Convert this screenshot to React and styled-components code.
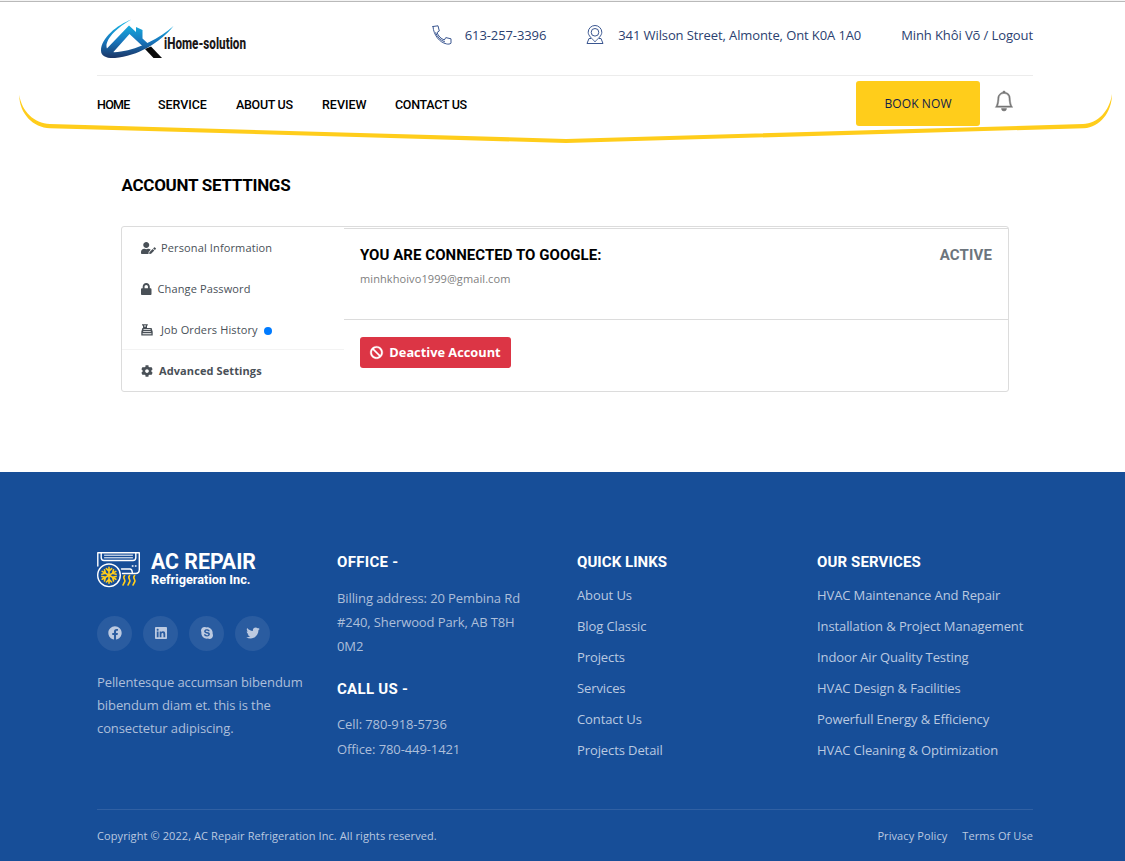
import React from 'react';
import styled, { createGlobalStyle } from 'styled-components';
import { FaUserEdit, FaLock, FaCog, FaBan } from 'react-icons/fa';
import { RiFacebookCircleFill, RiLinkedinBoxFill, RiSkypeFill, RiTwitterFill } from 'react-icons/ri';
import { BsBell } from 'react-icons/bs';

const GlobalStyle = createGlobalStyle`
  * { box-sizing: border-box; }
  body { margin: 0; background: #fff; font-family: 'Open Sans', sans-serif; }
  h1, h2, h3, p, ul { margin: 0; padding: 0; }
  ul { list-style: none; }
  a { color: inherit; text-decoration: none; }
  svg { display: block; flex: none; overflow: visible; }
`;

const Page = styled.div`
  width: 1125px;
  height: 861px;
  overflow: hidden;
  display: flex;
  flex-direction: column;
`;

const Container = styled.div`
  width: 936px;
  margin-left: 97px;
`;

const Header = styled.header`
  position: relative;
  height: 145px;
  padding-top: 2px;
  background: linear-gradient(#f4f4f4 0 1px, #b9b9b9 1px 2px, #fff 2px);
`;

const Curve = styled.svg`
  position: absolute;
  left: 0;
  top: 0;
`;

const TopBar = styled.div`
  height: 74px;
  display: flex;
  border-bottom: 1px solid #ececec;
`;

const Brand = styled.a`
  padding-top: 16px;
  margin-right: auto;
`;

const Contact = styled.a`
  display: flex;
  align-items: center;
  height: 66px;
  gap: ${(p) => p.$gap}px;
  margin-right: 40px;
  font-size: 13px;
  letter-spacing: -0.1px;
  color: #2b4170;
  white-space: nowrap;
  &:last-child { margin: 0; }
`;

const NavBar = styled.div`
  position: relative;
  height: 59px;
  display: flex;
  align-items: center;
  padding-bottom: 2px;
`;

const Display = styled.span`
  font-family: Roboto, sans-serif;
  white-space: nowrap;
  letter-spacing: ${(p) => p.$track || 0}px;
`;

const NavLink = styled(Display)`
  width: ${(p) => p.$w}px;
  font-size: 12.5px;
  font-weight: 500;
  color: #000;
`;

const BookButton = styled.button`
  width: 124px;
  height: 45px;
  margin: -3px 14px 0 auto;
  padding: 0;
  border: 0;
  border-radius: 3px;
  background: #ffcd1b;
  color: #10204a;
  font: 12px 'Open Sans', sans-serif;
  letter-spacing: 0.1px;
`;

const Bell = styled(BsBell)`
  width: 20px;
  height: 20px;
  margin: -8px 19px 0 0;
  color: #777;
  stroke: #777;
  stroke-width: 0.4;
`;

const Main = styled.main`
  width: 888px;
  height: 327px;
  margin-left: 121px;
  padding-top: 29px;
`;

const PageTitle = styled(Display).attrs({ as: 'h1' })`
  height: 52px;
  padding-left: 0.5px;
  font-size: 17px;
  line-height: 22px;
  font-weight: 700;
  color: #000;
`;

const Card = styled.section`
  display: flex;
  height: 166px;
  border: 1px solid #dcdcdc;
  border-radius: 3px;
`;

const Side = styled.nav`
  width: 222px;
`;

const SideItem = styled.a`
  display: flex;
  align-items: center;
  height: 41px;
  padding-left: 19px;
  font-size: 11px;
  letter-spacing: ${(p) => (p.$active ? 0.1 : 0.13)}px;
  color: #495057;
  font-weight: ${(p) => (p.$active ? 700 : 400)};
  box-shadow: ${(p) => (p.$active ? '0 -1px 0 #f3f3f3' : 'none')};
  svg {
    width: ${(p) => p.$icon}px;
    height: 12px;
    margin-right: ${(p) => p.$gap}px;
  }
`;

const Dot = styled.i`
  width: 8px;
  height: 8px;
  margin: 2px 0 0 6px;
  border-radius: 50%;
  background: #007bff;
`;

const Panel = styled.div`
  flex: 1;
  padding-top: 1px;
`;

const Connection = styled.div`
  display: flex;
  justify-content: space-between;
  height: 92px;
  padding: 16px 16px 0;
  border-top: 1px solid #dcdcdc;
  border-bottom: 1px solid #dcdcdc;
`;

const PanelTitle = styled(Display).attrs({ as: 'h2' })`
  font-size: 15px;
  line-height: 20px;
  font-weight: 700;
  color: ${(p) => p.$color || '#000'};
`;

const Email = styled.p`
  margin-top: 6px;
  font-size: 11px;
  line-height: 16px;
  letter-spacing: 0.09px;
  color: #808080;
`;

const DangerButton = styled.button`
  display: flex;
  align-items: center;
  justify-content: center;
  gap: 6px;
  width: 151px;
  height: 31px;
  margin: 17px 0 0 16px;
  padding: 0 0 2px;
  border: 0;
  border-radius: 3px;
  background: #dc3545;
  color: #fff;
  font: 700 12.8px 'Open Sans', sans-serif;
  svg { margin-top: 2px; stroke: #fff; stroke-width: 12; }
`;

const Footer = styled.footer`
  height: 389px;
  padding-top: 79px;
  background: #174e98;
  color: #adbfda;
  font-size: 13px;
`;

const Columns = styled.div`
  display: grid;
  grid-template-columns: repeat(4, 240px);
  height: 258px;
`;

const Socials = styled.div`
  display: flex;
  gap: 11px;
  margin-top: 27px;
`;

const Social = styled.a`
  display: flex;
  align-items: center;
  justify-content: center;
  width: 35px;
  height: 35px;
  padding-bottom: 1px;
  border-radius: 50%;
  background: #2a5ca0;
  color: #bccae1;
`;

const About = styled.p`
  margin-top: 20px;
  line-height: 23px;
  letter-spacing: -0.1px;
  white-space: pre-line;
`;

const FootTitle = styled(Display).attrs({ as: 'h3' })`
  font-size: 15px;
  line-height: 22px;
  font-weight: 700;
  color: #fff;
`;

const Block = styled.p`
  margin: ${(p) => p.$m};
  line-height: ${(p) => p.$lh}px;
  letter-spacing: -0.1px;
  white-space: pre-line;
`;

const Links = styled.ul`
  margin-top: 7px;
  li {
    height: 31px;
    line-height: 31px;
    white-space: nowrap;
    color: #bac9e0;
    letter-spacing: -0.1px;
  }
`;

const Legal = styled.div`
  display: flex;
  gap: 15px;
  padding-top: 17px;
  border-top: 1px solid #3060a3;
  font-size: 11px;
  line-height: 18px;
  letter-spacing: 0.09px;
  color: #bac9e0;
  span:first-child { margin-right: auto; }
`;

function HomeLogo() {
  return (
    <svg width="200" height="42" viewBox="97 18 200 42">
      <defs>
        <linearGradient id="sky" gradientUnits="userSpaceOnUse" x1="0" y1="24" x2="0" y2="58">
          <stop offset="0" stopColor="#16b0e0" />
          <stop offset="0.5" stopColor="#1877bd" />
          <stop offset="1" stopColor="#1b3566" />
        </linearGradient>
      </defs>
      <path fill="url(#sky)" d="M131.500 19.500C117 25 101 38 101 50.500C101 56.500 107 58.500 115 58C137 56.500 161 42 173.500 26C160 38 139 49 121 51.500C112 53 107 52 106.500 46.500C106 38 119 26 131.500 19.500Z" />
      <path fill="url(#sky)" d="M105 50.500L129 25.500L136 32V27L142.500 30V38.500L149 44.500L144 47.500L129.500 34L112.500 53Z" />
      <path fill="#0a0a0a" d="M145 49L151 46.500L162 58H153.500Z" />
      <text x="164" y="49.300" fontFamily="Roboto, sans-serif" fontSize="16.500" fontWeight="800" fill="#1c1718" textLength="82" lengthAdjust="spacingAndGlyphs">iHome-solution</text>
    </svg>
  );
}

function PhoneIcon() {
  return (
    <svg width="20" height="20" viewBox="0 0 20 20" fill="none" stroke="#3a5690" strokeWidth="1" strokeLinejoin="round" strokeLinecap="round">
      <path d="M1 1.500L6 .8L7.300 6L5 7.600C6.200 10.800 9 13.800 12.300 15L13.800 12.600L19 13.800V18.200C18 19.200 16 19.300 14.500 18.900C7.500 17.500 1.500 10 1 1.500Z" />
      <path d="M3.600 7.800C5.200 12 8.500 15.200 12.600 16.800" />
    </svg>
  );
}

function PlaceIcon() {
  return (
    <svg width="18" height="20" viewBox="0 0 18 20" fill="none" stroke="#3a5690" strokeWidth="1" strokeLinejoin="round">
      <path d="M9 16.800C6 13.500 2.200 10.700 2.200 7.300A6.800 6.800 0 0 1 15.800 7.300C15.800 10.700 12 13.500 9 16.800Z" />
      <circle cx="9" cy="7.300" r="3.800" />
      <path d="M5 13.500H3L1 18.500H17L15 13.500H13" />
    </svg>
  );
}

function RegisterIcon() {
  return (
    <svg viewBox="0 0 12 12" fill="currentColor" fillRule="evenodd">
      <path d="M1 .3H6.800V1.400H6V4H10.600L11.700 7.800V11.500H.3V7.800L1.400 4H2V1.400H1ZM3 1.600V2.600H5V1.600ZM2.500 5.200V6H9.500V5.200ZM2.200 7V7.800H9.800V7ZM1.600 9.300V10.200H10.400V9.300Z" />
    </svg>
  );
}

function RepairLogo() {
  return (
    <svg width="190" height="38" viewBox="97 551 190 38" fill="none" strokeLinecap="round" strokeLinejoin="round">
      <g stroke="#fff" strokeWidth="1.400">
        <path d="M97.800 566V552.700H139.300V569.500Q139.300 573.500 135.500 573.500H122.500" />
        <path d="M101.200 553V557.500Q101.200 560.500 104 560.500H133Q135.800 560.500 135.800 557.500V553" />
        <path d="M104.500 555.200H132.500M104.500 557.800H132.500" strokeWidth="1" />
        <path d="M121.500 569H130Q132 569 132.300 572.500" />
        <path d="M132.300 566H133M135.400 566H136" />
        <circle cx="109" cy="575.300" r="11.300" />
      </g>
      <g stroke="#ffcd1b" strokeWidth="1.600">
        {[0, 60, 120, 180, 240, 300].map((a) => (
          <path key={a} transform={`rotate(${a} 109 575.3)`} d="M109 575.300V567.400M106.400 568.600L109 571.200L111.600 568.600" />
        ))}
        {[124, 129, 134].map((x) => (
          <path key={x} d={`M${x + 0.6} 575.5C${x - 2.2} 578.3 ${x + 2.4} 579.5 ${x + 0.6} 582C${x - 0.2} 583.3 ${x - 0.5} 584.2 ${x - 1} 585`} />
        ))}
      </g>
      <g fill="#fff" fontFamily="Roboto, sans-serif" fontWeight="700">
        <text x="151" y="568.800" fontSize="21.500" textLength="105" lengthAdjust="spacingAndGlyphs">AC REPAIR</text>
        <text x="151" y="584.200" fontSize="12.400" textLength="99.500" lengthAdjust="spacingAndGlyphs">Refrigeration Inc.</text>
      </g>
    </svg>
  );
}

const nav = [
  ['HOME', 61, -0.7],
  ['SERVICE', 78, -0.05],
  ['ABOUT US', 86, -0.3],
  ['REVIEW', 73, 0],
  ['CONTACT US', 90, -0.3],
];
const quick = ['About Us', 'Blog Classic', 'Projects', 'Services', 'Contact Us', 'Projects Detail'];
const services = [
  'HVAC Maintenance And Repair',
  'Installation & Project Management',
  'Indoor Air Quality Testing',
  'HVAC Design & Facilities',
  'Powerfull Energy & Efficiency',
  'HVAC Cleaning & Optimization',
];
const socials = [RiFacebookCircleFill, RiLinkedinBoxFill, RiSkypeFill, RiTwitterFill];

export default function App() {
  return (
    <Page>
      <GlobalStyle />
      <Header>
        <Curve width="1125" height="145">
          <path fill="#ffcd1b" d="M19.300 95C19 113 33 128 50 128.200L566 143L1084 128.200C1100 127.500 1112 112 1112 94C1109.500 111 1098 123.500 1083 124L566 139L50 124C34 123.500 21.500 111 19.300 95Z" />
        </Curve>
        <Container>
          <TopBar>
            <Brand><HomeLogo /></Brand>
            <Contact $gap={13}><PhoneIcon />613-257-3396</Contact>
            <Contact $gap={14}><PlaceIcon />341 Wilson Street, Almonte, Ont K0A 1A0</Contact>
            <Contact>Minh Khôi Võ / Logout</Contact>
          </TopBar>
          <NavBar>
            {nav.map(([label, w, t]) => <NavLink key={label} $w={w} $track={t}>{label}</NavLink>)}
            <BookButton>BOOK NOW</BookButton>
            <Bell />
          </NavBar>
        </Container>
      </Header>
      <Main>
        <PageTitle $track={-0.28}>ACCOUNT SETTTINGS</PageTitle>
        <Card>
          <Side>
            <SideItem $icon={15} $gap={5}><FaUserEdit />Personal Information</SideItem>
            <SideItem $icon={10.5} $gap={6}><FaLock />Change Password</SideItem>
            <SideItem $icon={12} $gap={8}><RegisterIcon />Job Orders History<Dot /></SideItem>
            <SideItem $icon={12} $gap={6} $active><FaCog />Advanced Settings</SideItem>
          </Side>
          <Panel>
            <Connection>
              <div>
                <PanelTitle $track={0.05}>YOU ARE CONNECTED TO GOOGLE:</PanelTitle>
                <Email>minhkhoivo1999@gmail.com</Email>
              </div>
              <PanelTitle $color="#6c757d" $track={0.15}>ACTIVE</PanelTitle>
            </Connection>
            <DangerButton><FaBan size={13} />Deactive Account</DangerButton>
          </Panel>
        </Card>
      </Main>
      <Footer>
        <Container>
          <Columns>
            <div>
              <RepairLogo />
              <Socials>
                {socials.map((Icon, i) => <Social key={i}><Icon size={16} /></Social>)}
              </Socials>
              <About>{'Pellentesque accumsan bibendum\nbibendum diam et. this is the\nconsectetur adipiscing.'}</About>
            </div>
            <div>
              <FootTitle $track={0.3}>OFFICE -</FootTitle>
              <Block $m="13px 0 20px" $lh={24}>{'Billing address: 20 Pembina Rd\n#240, Sherwood Park, AB T8H\n0M2'}</Block>
              <FootTitle $track={0.3}>CALL US -</FootTitle>
              <Block $m="12px 0 0" $lh={25}>{'Cell: 780-918-5736\nOffice: 780-449-1421'}</Block>
            </div>
            <div>
              <FootTitle $track={0.05}>QUICK LINKS</FootTitle>
              <Links>{quick.map((t) => <li key={t}>{t}</li>)}</Links>
            </div>
            <div>
              <FootTitle $track={0.12}>OUR SERVICES</FootTitle>
              <Links>{services.map((t) => <li key={t}>{t}</li>)}</Links>
            </div>
          </Columns>
          <Legal>
            <span>Copyright © 2022, AC Repair Refrigeration Inc. All rights reserved.</span>
            <span>Privacy Policy</span>
            <span>Terms Of Use</span>
          </Legal>
        </Container>
      </Footer>
    </Page>
  );
}
